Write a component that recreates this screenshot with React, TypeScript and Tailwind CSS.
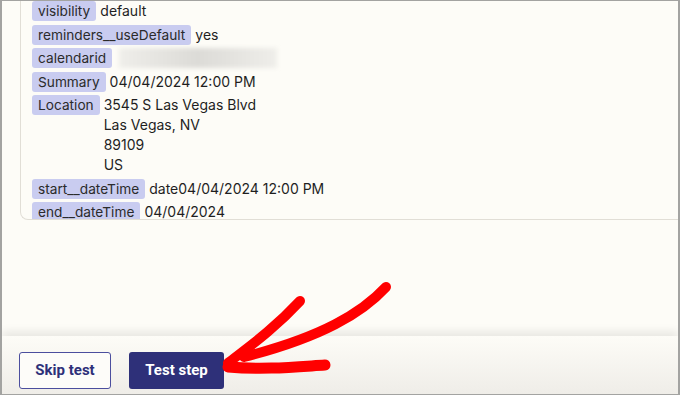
import type { ReactNode } from 'react'

const ROWS: { label: string; value: ReactNode }[] = [
  { label: 'visibility', value: 'default' },
  { label: 'reminders__useDefault', value: 'yes' },
  {
    label: 'calendarid',
    value: (
      <div className="ml-[3px] h-5 w-[158px] bg-gradient-to-r from-[#efeeea] via-[#dcdbd7] to-[#efeeea] blur-[2px]" />
    ),
  },
  { label: 'Summary', value: '04/04/2024 12:00 PM' },
  {
    label: 'Location',
    value: (
      <>
        3545 S Las Vegas Blvd
        <br />
        Las Vegas, NV
        <br />
        89109
        <br />
        US
      </>
    ),
  },
  { label: 'start__dateTime', value: 'date04/04/2024 12:00 PM' },
  { label: 'end__dateTime', value: '04/04/2024' },
]

export default function App() {
  return (
    <div className="relative flex h-[395px] w-[680px] flex-col overflow-hidden border-x-2 border-y border-[#a3a3a1] bg-[#fdfcf7] font-['Inter',sans-serif]">
      {/* Output data */}
      <div className="flex-1 pl-[18px]">
        <div className="h-[219px] overflow-hidden rounded-bl-lg border-b border-l border-[#e1ded6] pl-[11px]">
          <div className="flex flex-col gap-y-[3.5px]">
            {ROWS.map(({ label, value }) => (
              <div key={label} className="flex items-start gap-[4px]">
                <span className="h-5 shrink-0 rounded-[3px] bg-[#c9ccf0] px-[6px] text-[13.7px] leading-5 text-[#2b2b2b]">
                  {label}
                </span>
                <div className="text-[14px] leading-5 text-[#1f1f1f]">{value}</div>
              </div>
            ))}
          </div>
        </div>
      </div>

      {/* Footer */}
      <div className="flex h-[58px] gap-[18px] bg-gradient-to-b from-[#fdfcf7] to-[#efede8] pl-[17px] pt-[16px] shadow-[0_-5px_8px_rgba(0,0,0,0.08)]">
        <button className="h-[37px] w-[92px] rounded-[3px] border-[1.5px] border-[#4b4e9e] bg-[#fdfcf9] font-['Roboto',sans-serif] text-[15px] font-bold text-[#2e3079]">
          Skip test
        </button>
        <button className="h-[37px] w-[95px] rounded-[3px] bg-[#2e3079] font-['Roboto',sans-serif] text-[15px] font-bold text-white">
          Test step
        </button>
      </div>

      {/* Annotation arrow */}
      <svg className="pointer-events-none absolute left-0 top-0" width="680" height="395" viewBox="0 0 680 395">
        <g fill="none" stroke="#ff0000" strokeLinecap="round" strokeLinejoin="round">
          <path d="M384 286 C360 312 320 336 242 356" strokeWidth="10" />
          <path d="M298 300 C272 328 248 345 226 362" strokeWidth="10" />
          <path d="M226 366 C262 369 292 366 323 364" strokeWidth="11" />
        </g>
      </svg>
    </div>
  )
}
